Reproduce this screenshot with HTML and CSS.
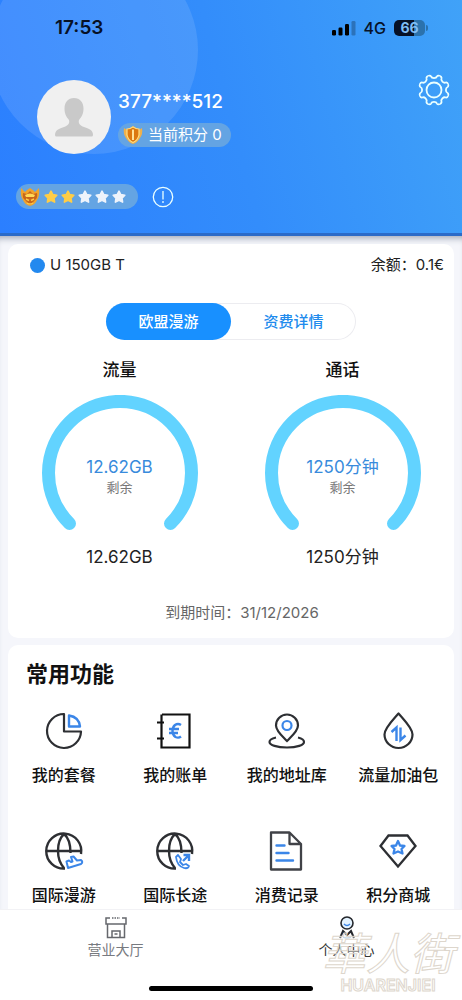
FILE: index.html
```html
<!DOCTYPE html>
<html lang="zh-CN">
<head>
<meta charset="utf-8">
<meta name="viewport" content="width=device-width, initial-scale=1">
<title>个人中心</title>
<link rel="stylesheet" href="styles.css">
</head>
<body>
<svg class="defs" aria-hidden="true">
  <defs>
    <symbol id="star" viewBox="0 0 14 14"><path d="M7 1.2 8.8 4.6 12.8 5.3 10 8.1 10.6 12.1 7 10.4 3.4 12.1 4 8.1 1.2 5.3 5.2 4.6Z" fill="currentColor" stroke="currentColor" stroke-width="1.6" stroke-linejoin="round"/></symbol>
    <symbol id="globe" viewBox="0 0 40 40"><path d="M37 23A17.500 17.500 0 1 0 21 37.500M2.500 20H37.500M20 37C15.500 32 14 26 14 20S15.500 7 20 3C25 7 26.500 14 26.500 22" fill="none" stroke="#2d2f33" stroke-width="2.400"/></symbol>
    <path id="tooth" d="M-5.700-13.800C-5.300-14.400-3.600-14.700-3-13.600C-2.400-12-1.700-11.900 0-11.900C1.700-11.900 2.400-12 3-13.600C3.600-14.700 5.300-14.400 5.700-13.800"/>
    <path id="arc" d="M27.500 128.500A71.500 71.500 0 1 1 128.500 128.500" fill="none" stroke="#62d3ff" stroke-width="13" stroke-linecap="round"/>
  </defs>
</svg>

<header class="hero">
  <div class="status">
    <time>17:53</time>
    <div class="status-right">
      <svg class="signal" viewBox="0 0 24 16" aria-hidden="true"><rect x="0" y="10" width="4" height="5.500" rx="1.200"/><rect x="6.500" y="7.500" width="4" height="8" rx="1.200"/><rect x="13" y="4" width="4" height="11.500" rx="1.200"/><rect x="19.500" y="1" width="4" height="14.500" rx="1.200" opacity=".25"/></svg>
      <span>4G</span>
      <span class="battery">66</span>
    </div>
  </div>
  <div class="profile">
    <svg class="avatar" viewBox="0 0 74 74" role="img" aria-label="头像"><circle cx="37" cy="37" r="37" fill="#f0f0f0"/><path d="M37 18C43 18 46.500 22.500 46.500 28.500C46.500 34 44.500 37 42 40C41 43.500 43 45.500 47 47C53 49 56 50.500 56 55Q56 56.500 54.500 56.500H19.500Q18 56.500 18 55C18 50.500 21 49 27 47C31 45.500 33 43.500 32 40C29.500 37 27.500 34 27.500 28.500C27.500 22.500 31 18 37 18Z" fill="#c9c9c9"/></svg>
    <div class="who">
      <h1>377****512</h1>
      <p class="points">
        <svg class="shield" viewBox="0 0 20 20" aria-hidden="true"><path d="M1 3Q0 9 3 13Q6 18 10 19Q14 18 17 13Q20 9 19 3L16 5 10 1 4 5Z" fill="#efb04a"/><path d="M10 2Q13 4 16 4V10Q15 15 10 17.500Q5 15 4 10V4Q7 4 10 2Z" fill="#dc780f" stroke="#ffdc80" stroke-width="1.200"/><path d="M10 4.500V15" stroke="#ffe39a" stroke-width="2"/></svg>
        <span>当前积分 0</span>
      </p>
    </div>
    <button class="icon-button settings" aria-label="设置">
      <svg viewBox="-16 -16 32 32" aria-hidden="true"><use href="#tooth"/><use href="#tooth" transform="rotate(45)"/><use href="#tooth" transform="rotate(90)"/><use href="#tooth" transform="rotate(135)"/><use href="#tooth" transform="rotate(180)"/><use href="#tooth" transform="rotate(225)"/><use href="#tooth" transform="rotate(270)"/><use href="#tooth" transform="rotate(315)"/><circle r="7.500"/></svg>
    </button>
  </div>
  <div class="level">
    <div class="stars" role="img" aria-label="2 / 5">
      <svg class="crest" viewBox="0 0 20 20"><path d="M1 1 5 5 7 3 10 1 13 3 15 5 19 1Q20 9 17 13Q15 18 10 19Q5 18 3 13Q0 9 1 1Z" fill="#f0a32c"/><path d="M3 6 7 7 10 4 13 7 17 6Q18 11 15 13L10 18 5 13Q2 11 3 6Z" fill="#c9661a"/><path d="M5 8Q10 5 15 8L14 10H6Z" fill="#ffd957"/><path d="M6 12 9 13.500M14 12 11 13.500M7 16Q10 18 13 16" fill="none" stroke="#ffc947" stroke-width="1.500"/></svg>
      <svg class="star on"><use href="#star"/></svg><svg class="star on"><use href="#star"/></svg><svg class="star"><use href="#star"/></svg><svg class="star"><use href="#star"/></svg><svg class="star"><use href="#star"/></svg>
    </div>
    <button class="icon-button info" aria-label="等级说明">
      <svg viewBox="0 0 22 22" aria-hidden="true"><circle cx="11" cy="11" r="9.700"/><path d="M11 5V13.500M11 15V17"/></svg>
    </button>
  </div>
</header>

<main>
  <section class="card plan">
    <div class="plan-head"><span class="plan-name">U 150GB T</span><span>余额：0.1€</span></div>
    <div class="segments"><button class="active">欧盟漫游</button><button>资费详情</button></div>
    <div class="usage">
      <div class="meter">
        <h2>流量</h2>
        <div class="dial"><svg viewBox="0 0 156 138" aria-hidden="true"><use href="#arc"/></svg><div class="reading"><strong>12.62GB</strong><span>剩余</span></div></div>
        <p>12.62GB</p>
      </div>
      <div class="meter">
        <h2>通话</h2>
        <div class="dial"><svg viewBox="0 0 156 138" aria-hidden="true"><use href="#arc"/></svg><div class="reading"><strong>1250分钟</strong><span>剩余</span></div></div>
        <p>1250分钟</p>
      </div>
    </div>
    <p class="expiry">到期时间：31/12/2026</p>
  </section>

  <section class="card functions">
    <h2>常用功能</h2>
    <div class="grid">
      <a href="#plan"><svg viewBox="0 0 40 40" aria-hidden="true"><path d="M20 3A17 17 0 1 0 37 20.500H20Z" fill="none" stroke="#2d2f33" stroke-width="2.200" stroke-linejoin="round"/><path d="M25 4.500Q35 6 36 15.500H25Z" fill="none" stroke="#3b86e8" stroke-width="2.400" stroke-linejoin="round"/></svg><span>我的套餐</span></a>
      <a href="#bill"><svg viewBox="0 0 40 40" aria-hidden="true"><path d="M7 3.500H34.500V36.500H6.500V3.500M2 11.500H9M2 27.500H9" fill="none" stroke="#111" stroke-width="2.200"/><path d="M26 14Q23 12 20 14Q17.500 16 17.500 20Q17.500 24 20.500 26Q23.500 27.500 26 25.500M14 18H24M14 22H23" fill="none" stroke="#3b86e8" stroke-width="2.400"/></svg><span>我的账单</span></a>
      <a href="#address"><svg viewBox="0 0 40 40" aria-hidden="true"><path d="M20 30C15 25 9 20 9 14.500A11 11 0 0 1 31 14.500C31 20 25 25 20 30ZM9 26.500C4 27.500 2.500 29 2.500 31C2.500 34 10 36.500 20 36.500S37 34 37 31C37 29 35.500 27.500 31 26.500" fill="none" stroke="#2d2f33" stroke-width="2.200"/><circle cx="20" cy="14.500" r="4.500" fill="none" stroke="#3b86e8" stroke-width="2.200"/></svg><span>我的地址库</span></a>
      <a href="#topup"><svg viewBox="0 0 40 40" aria-hidden="true"><path d="M20.500 2.500C15 9 6.500 17 6.500 23.500A14 13.500 0 0 0 34.500 23.500C34.500 17 26 9 20.500 2.500Z" fill="none" stroke="#2d2f33" stroke-width="2.200" stroke-linejoin="round"/><path d="M13.500 21 18.500 16.500V30M22.500 16.500V29L27.500 24.500" fill="none" stroke="#3b86e8" stroke-width="2.400"/></svg><span>流量加油包</span></a>
      <a href="#roaming"><svg viewBox="0 0 40 40" aria-hidden="true"><use href="#globe"/><path d="M22.500 30.500 25 29.500 27 31 28.500 30.500 27 26 29.500 25.500 33 29.500 37 29Q39.500 31 37 33L24 37Z" fill="#fff" stroke="#3b86e8" stroke-width="2" stroke-linejoin="round"/></svg><span>国际漫游</span></a>
      <a href="#long-distance"><svg viewBox="0 0 40 40" aria-hidden="true"><use href="#globe"/><path d="M21 26 23 24 26 28 25 31 28 34 31 33 34 35Q33 38 29 37Q22 35 21 26Z" fill="#fff" stroke="#3b86e8" stroke-width="1.800" stroke-linejoin="round"/><path d="M28 30 33 25M28.500 24H34V30" fill="none" stroke="#3b86e8" stroke-width="2.400"/></svg><span>国际长途</span></a>
      <a href="#records"><svg viewBox="0 0 40 40" aria-hidden="true"><path d="M4 1.500H22.500L34 13V38.500H4ZM22.500 1.500V13H34" fill="none" stroke="#404247" stroke-width="2.300" stroke-linejoin="round"/><path d="M9.500 14.500H17.500M9.500 22H21.500M9.500 29.500H26" stroke="#3b86e8" stroke-width="2.400" stroke-linecap="round"/></svg><span>消费记录</span></a>
      <a href="#mall"><svg viewBox="0 0 40 40" aria-hidden="true"><path d="M10.500 4.500H29.500L37.500 15 20 35.500 2.500 15Z" fill="none" stroke="#2d2f33" stroke-width="2.300"/><path d="M20 10 22 14.500 26.500 15 23.500 18 24.500 22.500 20 20.500 15.500 22.500 16.500 18 13.500 15 18 14.500Z" fill="none" stroke="#3b86e8" stroke-width="2.300" stroke-linejoin="round"/></svg><span>积分商城</span></a>
    </div>
  </section>
</main>

<nav class="tabs">
  <a href="#store"><svg viewBox="0 0 24 24" aria-hidden="true"><path d="M6 2H2V8H22V2H18M3.500 8V21.500H20.500V8M8 21V15H16V21M10.500 18H13.500" fill="none" stroke="#66686d" stroke-width="1.500"/><path d="M8 2H16" stroke="#66686d" stroke-width="1.500" stroke-dasharray="1.500 1"/></svg><span>营业大厅</span></a>
  <a href="#me" class="current" aria-current="page"><svg viewBox="0 0 24 24" aria-hidden="true"><circle cx="12" cy="7" r="6" fill="#e4f3ff" stroke="#24272c" stroke-width="1.600"/><path d="M9 8Q12 11 15 8" fill="none" stroke="#3b86e8" stroke-width="1.400"/><path d="M5 22 8 15 12 19 16 15 19 22" fill="none" stroke="#24272c" stroke-width="2"/><path d="M8 21Q12 23 16 21" fill="none" stroke="#a9c5df" stroke-width="1.500"/></svg><span>个人中心</span></a>
  <div class="home-bar"></div>
  <div class="watermark"><b>華人街</b><span>HUARENJIEI</span></div>
</nav>
</body>
</html>
```
FILE: styles.css
```css
* { box-sizing: border-box; margin: 0; }
body {
  min-height: 100vh;
  background: #f5f6fb;
  color: #222;
  font: 15px/20px Inter, "Noto Sans CJK SC", sans-serif;
}
a { color: inherit; text-decoration: none; }
button { border: 0; padding: 0; background: none; font: inherit; color: inherit; cursor: pointer; }
svg { display: block; flex: none; }
.defs { position: absolute; width: 0; height: 0; }

.hero {
  position: relative;
  isolation: isolate;
  overflow: hidden;
  padding: 16px 12px 24px 16px;
  background: linear-gradient(75deg, #2b7fff 0%, #338dfb 50%, #40a2f8 100%);
  border-bottom: 3px solid #2b6bc8;
  color: #fff;
}
.hero::before {
  content: "";
  position: absolute;
  z-index: -1;
  left: -10px;
  top: -54px;
  width: 208px;
  height: 208px;
  border-radius: 50%;
  background: rgb(255 255 255 / 11%);
}
.status {
  display: flex;
  justify-content: space-between;
  align-items: center;
  height: 24px;
  padding: 0 25px 0 39px;
  color: #071126;
}
.status time { font-size: 19px; font-weight: 600; }
.status-right { display: flex; align-items: center; gap: 8px; font-size: 16px; font-weight: 500; }
.signal { width: 24px; height: 16px; }
.battery {
  position: relative;
  width: 31px;
  height: 16px;
  border-radius: 5px;
  background: linear-gradient(90deg, #071126 66%, #2b72ad 66%);
  color: #7fbdf5;
  font-size: 14px;
  font-weight: 700;
  line-height: 16px;
  text-align: center;
}
.battery::after {
  content: "";
  position: absolute;
  left: 32px;
  top: 5px;
  width: 2px;
  height: 6px;
  border-radius: 0 2px 2px 0;
  background: #2b72ad;
}
.profile { display: flex; margin-top: 40px; padding-left: 21px; gap: 7px; }
.avatar { width: 74px; height: 74px; }
.who { flex: 1; padding-top: 10px; }
.who h1 { font-size: 19px; line-height: 24px; font-weight: 500; }
.points {
  display: inline-flex;
  align-items: center;
  gap: 5px;
  height: 24px;
  margin-top: 9px;
  padding: 0 9px 0 5px;
  border-radius: 12px;
  background: #64a4e3;
}
.shield, .crest { width: 20px; height: 20px; }
.icon-button svg { fill: none; stroke: #eaffff; stroke-width: 1.8; }
.settings { align-self: flex-start; margin-top: -6px; }
.settings svg { width: 32px; height: 32px; }
.level { display: flex; align-items: center; gap: 14px; margin-top: 30px; }
.stars {
  display: flex;
  align-items: center;
  gap: 3px;
  width: 122px;
  height: 25px;
  padding-left: 4px;
  border-radius: 13px;
  background: #64a4e3;
}
.crest { margin-right: 1px; }
.star { width: 14px; height: 14px; color: #eef3fb; }
.star.on { color: #ffcd46; }
.info svg { width: 22px; height: 22px; stroke-width: 1.3; }

main { display: grid; gap: 7px; padding: 8px 8px 0; box-shadow: inset 0 7px 7px -5px #9da5b3; }
.card { border-radius: 10px; background: #fff; }
.plan { padding: 11px 0 15px; }
.plan-head { display: flex; justify-content: space-between; padding: 0 10px 0 22px; }
.plan-name { display: flex; align-items: center; gap: 5px; }
.plan-name::before { content: ""; width: 15px; height: 15px; border-radius: 50%; background: #2389ef; }
.segments {
  display: flex;
  width: 250px;
  height: 37px;
  margin: 28px auto 0;
  border-radius: 19px;
  box-shadow: inset 0 0 0 1px #ececf0;
}
.segments button { flex: 1; border-radius: 19px; color: #218bed; font-weight: 500; }
.segments .active { background: #1890ff; color: #fff; }
.usage { display: grid; grid-template-columns: 1fr 1fr; margin-top: 18px; text-align: center; }
.meter h2 { font-size: 17px; line-height: 24px; font-weight: 500; color: #111; }
.dial { position: relative; width: 156px; margin: 13px auto 0; }
.dial > svg { width: 156px; height: 138px; }
.reading { position: absolute; inset: 60px 0 auto; display: grid; }
.reading strong { font-size: 17px; line-height: 24px; font-weight: 400; color: #388bdc; }
.reading span { font-size: 13px; line-height: 16px; color: #777; }
.meter p { margin-top: 12px; font-size: 17px; line-height: 24px; }
.expiry { margin-top: 34px; padding-left: 22px; text-align: center; color: #666; }
.functions { padding-top: 16px; }
.functions h2 { padding-left: 18px; font-size: 22px; line-height: 26px; font-weight: 700; color: #111; }
.grid { display: grid; grid-template-columns: repeat(4, 1fr); row-gap: 46px; padding: 24px 0 102px; }
.grid a { display: flex; flex-direction: column; align-items: center; gap: 14px; color: #111; font-size: 16px; line-height: 20px; font-weight: 500; }
.grid svg { width: 40px; height: 40px; }

.tabs {
  position: fixed;
  inset: auto 0 0;
  display: grid;
  grid-template-columns: 1fr 1fr;
  align-content: space-between;
  height: 91px;
  padding: 6px 0 9px;
  border-top: 1px solid #f2f2f5;
  background: #fff;
}
.tabs a { display: flex; flex-direction: column; align-items: center; font-size: 14px; line-height: 20px; color: #777a80; }
.tabs a svg { width: 24px; height: 24px; }
.tabs .current { color: #333; }
.home-bar { grid-column: 1 / -1; justify-self: center; width: 164px; height: 5px; border-radius: 3px; background: #000; }
.watermark {
  position: absolute;
  right: 8px;
  bottom: 8px;
  display: grid;
  justify-items: center;
  color: rgb(255 255 255 / 40%);
  -webkit-text-stroke: 1px #ddd6cc;
  pointer-events: none;
}
.watermark b { font: italic 400 44px/54px "Noto Sans CJK TC", sans-serif; }
.watermark span { font: 600 16px/14px Inter, sans-serif; }
```
